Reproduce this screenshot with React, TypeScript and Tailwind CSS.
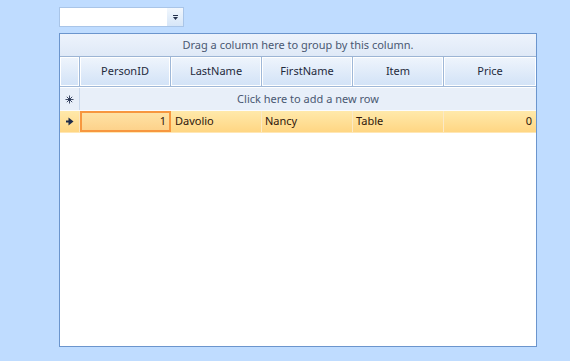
import React from "react";

const font = { fontFamily: '"Noto Sans", "Open Sans", sans-serif' };

function Asterisk() {
  return (
    <svg width="9" height="9" viewBox="0 0 9 9">
      <g stroke="#2a3756" strokeWidth="0.9" strokeLinecap="butt">
        <line x1="4.5" y1="0.5" x2="4.5" y2="8.5" />
        <line x1="0.5" y1="4.5" x2="8.5" y2="4.5" />
        <line x1="1.8" y1="1.8" x2="7.2" y2="7.2" />
        <line x1="7.2" y1="1.8" x2="1.8" y2="7.2" />
      </g>
      <circle cx="4.5" cy="4.5" r="1.3" fill="#2a3756" />
    </svg>
  );
}

function Arrow() {
  return (
    <svg width="8" height="9" viewBox="0 0 8 9">
      <rect x="0" y="3.5" width="3" height="2" fill="#1f2c4a" />
      <polygon points="2.5,0.5 7.5,4.5 2.5,8.5" fill="#1f2c4a" />
    </svg>
  );
}

function HeaderCell({ label, w }: { label: string; w: string }) {
  return (
    <div className={`${w} h-full border-r border-[#9fb8d8] flex`}>
      <div className="flex-1 border border-white bg-gradient-to-b from-[#eef4fc] to-[#d3e3f7] flex items-center justify-center text-[11px] text-[#1f2a3c]">
        {label}
      </div>
    </div>
  );
}

export default function App() {
  return (
    <div className="w-[570px] h-[361px] bg-[#bfdcff] overflow-hidden" style={font}>
      <div className="pt-[7px] pl-[59px]">
        <div className="w-[125px] h-[20px] border border-[#a9c5e8] bg-white flex justify-end">
          <div className="w-[16px] h-full bg-gradient-to-b from-[#f2f7fd] to-[#d6e6f8] flex flex-col items-center justify-center gap-[1px]">
            <div className="w-[5px] h-[1px] bg-[#25324d]" />
            <svg width="5" height="3" viewBox="0 0 5 3">
              <polygon points="0,0 5,0 2.5,3" fill="#25324d" />
            </svg>
          </div>
        </div>
      </div>

      <div className="ml-[59px] mt-[6px] w-[478px] h-[314px] border border-[#6b95cd] bg-white flex flex-col">
        {/* group panel */}
        <div className="h-[23px] border-b border-[#9cb4d4] bg-gradient-to-b from-[#edf3fc] to-[#dfe9f7] flex items-center justify-center text-[11px] text-[#4a5872]">
          Drag a column here to group by this column.
        </div>
        {/* header */}
        <div className="h-[30px] flex border-b border-[#9fb8d8]">
          <HeaderCell label="" w="w-[20px]" />
          <HeaderCell label="PersonID" w="w-[91px]" />
          <HeaderCell label="LastName" w="w-[91px]" />
          <HeaderCell label="FirstName" w="w-[91px]" />
          <HeaderCell label="Item" w="w-[91px]" />
          <div className="w-[92px] h-full flex">
            <div className="flex-1 border border-white bg-gradient-to-b from-[#eef4fc] to-[#d3e3f7] flex items-center justify-center text-[11px] text-[#1f2a3c]">
              Price
            </div>
          </div>
        </div>
        {/* new row */}
        <div className="h-[24px] flex border-t border-white border-b border-b-[#fafcff]">
          <div className="w-[20px] h-full border-r border-[#c9d8ec] bg-[#e8eff9] flex items-center justify-center">
            <Asterisk />
          </div>
          <div className="flex-1 h-full bg-[#e8eff9] flex items-center justify-center text-[11px] text-[#4a5872]">
            Click here to add a new row
          </div>
        </div>
        {/* data row */}
        <div className="h-[22px] flex bg-gradient-to-b from-[#ffe9aa] to-[#ffd683] text-[11px] text-[#2e160c] border-b border-[#ffe7b5]">
          <div className="w-[20px] h-full border-r border-[#fbe6bf] flex items-center justify-center">
            <Arrow />
          </div>
          <div className="w-[91px] h-full border-2 border-[#f7973f] bg-gradient-to-b from-[#fee2a4] to-[#fdd28b] flex items-center justify-end pr-[3px]">
            1
          </div>
          <div className="w-[91px] h-full border-r border-[#fbe9c6] flex items-center pl-[4px]">Davolio</div>
          <div className="w-[91px] h-full border-r border-[#fbe9c6] flex items-center pl-[3px]">Nancy</div>
          <div className="w-[91px] h-full border-r border-[#fbe9c6] flex items-center pl-[3px]">Table</div>
          <div className="w-[92px] h-full flex items-center justify-end pr-[4px]">0</div>
        </div>
        <div className="flex-1 bg-white" />
      </div>
    </div>
  );
}
